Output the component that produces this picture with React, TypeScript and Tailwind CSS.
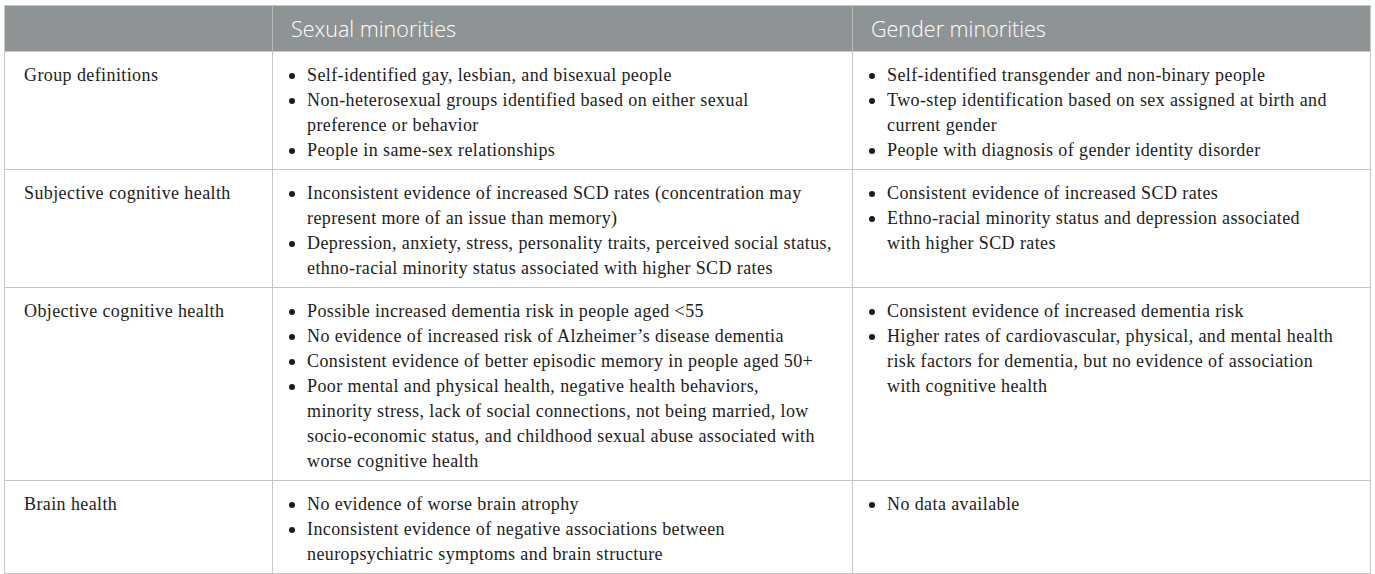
import React from 'react'

type Row = {
  label: string
  sexual: string[][]
  gender: string[][]
}

const rows: Row[] = [
  {
    label: 'Group definitions',
    sexual: [
      ['Self-identified gay, lesbian, and bisexual people'],
      ['Non-heterosexual groups identified based on either sexual', 'preference or behavior'],
      ['People in same-sex relationships'],
    ],
    gender: [
      ['Self-identified transgender and non-binary people'],
      ['Two-step identification based on sex assigned at birth and', 'current gender'],
      ['People with diagnosis of gender identity disorder'],
    ],
  },
  {
    label: 'Subjective cognitive health',
    sexual: [
      ['Inconsistent evidence of increased SCD rates (concentration may', 'represent more of an issue than memory)'],
      [
        'Depression, anxiety, stress, personality traits, perceived social status,',
        'ethno-racial minority status associated with higher SCD rates',
      ],
    ],
    gender: [
      ['Consistent evidence of increased SCD rates'],
      ['Ethno-racial minority status and depression associated', 'with higher SCD rates'],
    ],
  },
  {
    label: 'Objective cognitive health',
    sexual: [
      ['Possible increased dementia risk in people aged <55'],
      ['No evidence of increased risk of Alzheimer\u2019s disease dementia'],
      ['Consistent evidence of better episodic memory in people aged 50+'],
      [
        'Poor mental and physical health, negative health behaviors,',
        'minority stress, lack of social connections, not being married, low',
        'socio-economic status, and childhood sexual abuse associated with',
        'worse cognitive health',
      ],
    ],
    gender: [
      ['Consistent evidence of increased dementia risk'],
      [
        'Higher rates of cardiovascular, physical, and mental health',
        'risk factors for dementia, but no evidence of association',
        'with cognitive health',
      ],
    ],
  },
  {
    label: 'Brain health',
    sexual: [
      ['No evidence of worse brain atrophy'],
      ['Inconsistent evidence of negative associations between', 'neuropsychiatric symptoms and brain structure'],
    ],
    gender: [['No data available']],
  },
]

function Bullets({ items }: { items: string[][] }) {
  return (
    <ul>
      {items.map((lines, i) => (
        <li key={i} className="flex">
          <span className="flex h-[25px] w-[18px] shrink-0 items-center">
            <span className="mt-[1px] size-[6px] rounded-full bg-[#1c1c1c]" />
          </span>
          <span>
            {lines.map((l, j) => (
              <span key={j} className="block whitespace-nowrap">
                {l}
              </span>
            ))}
          </span>
        </li>
      ))}
    </ul>
  )
}

export default function App() {
  return (
    <div className="min-h-[574px] bg-white pl-[4px] pt-[5px]">
      <table
        className="w-[1366px] table-fixed border-collapse border border-[#c2c9c2] text-[18px] leading-[25px] tracking-[0.4px] text-[#1c1c1c]"
        style={{ fontFamily: '"Liberation Serif", "Times New Roman", serif' }}
      >
        <colgroup>
          <col className="w-[268px]" />
          <col className="w-[580px]" />
          <col className="w-[518px]" />
        </colgroup>
        <thead>
          <tr
            className="h-[46px] bg-[#8e9396] text-white"
            style={{ fontFamily: '"Open Sans", "Noto Sans", sans-serif' }}
          >
            <th className="border-r border-[#b4bab4]" />
            <th className="border-r border-[#b4bab4] pl-[18px] text-left text-[21.5px] font-light tracking-normal">
              Sexual minorities
            </th>
            <th className="pl-[18px] text-left text-[21.5px] font-light tracking-normal">Gender minorities</th>
          </tr>
        </thead>
        <tbody>
          {rows.map((r) => (
            <tr key={r.label} className="border-t border-[#c2c9c2] align-top">
              <td className="border-r border-[#c2c9c2] pb-[6px] pl-[19px] pt-[11px]">{r.label}</td>
              <td className="border-r border-[#c2c9c2] pb-[6px] pl-[16px] pt-[11px]">
                <Bullets items={r.sexual} />
              </td>
              <td className="pb-[6px] pl-[16px] pt-[11px]">
                <Bullets items={r.gender} />
              </td>
            </tr>
          ))}
        </tbody>
      </table>
    </div>
  )
}
